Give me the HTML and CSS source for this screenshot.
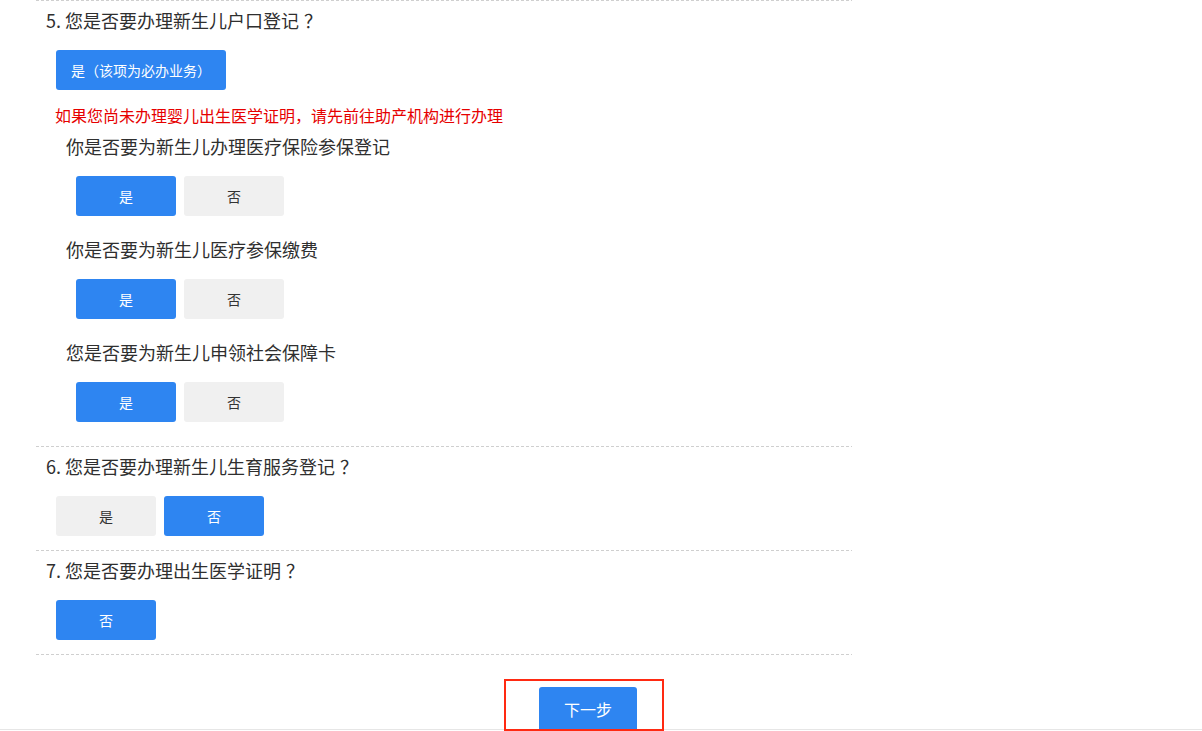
FILE: index.html
```html
<!DOCTYPE html>
<html lang="zh-CN">
<head>
<meta charset="utf-8">
<title>新生儿出生一件事</title>
<link rel="stylesheet" href="styles.css">
</head>
<body>
<div class="page">
  <div class="form">
    <div class="q">
      <div class="q-title">5. 您是否要办理新生儿户口登记<span class="qm">？</span></div>
      <div class="opts">
        <div class="btn on wide"><span class="btn-text">是（该项为必办业务）</span></div>
      </div>
      <div class="tip">如果您尚未办理婴儿出生医学证明，请先前往助产机构进行办理</div>
      <div class="sub-list">
        <div class="sub">
          <div class="sub-title">你是否要为新生儿办理医疗保险参保登记</div>
          <div class="opts">
            <div class="btn on">是</div>
            <div class="btn">否</div>
          </div>
        </div>
        <div class="sub">
          <div class="sub-title">你是否要为新生儿医疗参保缴费</div>
          <div class="opts">
            <div class="btn on">是</div>
            <div class="btn">否</div>
          </div>
        </div>
        <div class="sub">
          <div class="sub-title">您是否要为新生儿申领社会保障卡</div>
          <div class="opts">
            <div class="btn on">是</div>
            <div class="btn">否</div>
          </div>
        </div>
      </div>
    </div>
    <div class="q">
      <div class="q-title">6. 您是否要办理新生儿生育服务登记<span class="qm">？</span></div>
      <div class="opts">
        <div class="btn">是</div>
        <div class="btn on">否</div>
      </div>
    </div>
    <div class="q">
      <div class="q-title">7. 您是否要办理出生医学证明<span class="qm">？</span></div>
      <div class="opts">
        <div class="btn on">否</div>
      </div>
    </div>
    <div class="divider"></div>
    <div class="next-wrap">
      <div class="next-btn">下一步</div>
      <div class="mark"></div>
    </div>
  </div>
  <div class="footer"></div>
</div>
</body>
</html>
```

FILE: styles.css
```css
html, body {
  margin: 0;
  padding: 0;
  background: #fff;
}
body {
  font-family: "Noto Sans CJK SC", "Microsoft YaHei", sans-serif;
  color: #333;
  height: 731px;
  overflow: hidden;
}
.page {
  width: 1202px;
}
.form {
  margin-left: 36px;
  width: 816px;
}
.qm {
  display: inline-block;
  padding-left: 5px;
  margin-right: -5px;
}
.q,
.divider {
  background-image: repeating-linear-gradient(90deg, #cfcfcf 0 3px, transparent 3px 5px);
  background-repeat: no-repeat;
  background-size: 100% 1px;
  background-position: left top;
}
.q {
  padding: 8px 0 14px;
}
.divider {
  height: 1px;
}
.q-title {
  font-size: 18px;
  line-height: 24px;
  padding-left: 10px;
  color: #2f2f2f;
}
.opts {
  display: flex;
  gap: 8px;
  margin-top: 18px;
  padding-left: 20px;
}
.btn {
  box-sizing: border-box;
  height: 40px;
  min-width: 100px;
  padding: 0 15px;
  border-radius: 3px;
  background: #f0f0f0;
  color: #333;
  font-size: 14px;
  display: flex;
  align-items: center;
  justify-content: center;
}
.btn.on {
  background: #2e85f1;
  color: #fff;
}
.tip {
  margin-top: 14px;
  padding-left: 19px;
  font-size: 16px;
  line-height: 22px;
  color: #e60000;
}
.sub-list {
  padding-bottom: 10px;
}
.sub {
  margin-top: 21px;
}
.sub:first-child {
  margin-top: 8px;
}
.sub-title {
  font-size: 18px;
  line-height: 24px;
  padding-left: 30px;
  color: #2f2f2f;
}
.sub .opts {
  padding-left: 40px;
}
.next-wrap {
  position: relative;
  display: flex;
  padding-top: 32px;
  padding-left: 503px;
}
.next-btn {
  width: 98px;
  height: 42px;
  border-radius: 3px 3px 0 0;
  background: #2e85f1;
  color: #fff;
  font-size: 16px;
  display: flex;
  align-items: center;
  justify-content: center;
  padding-top: 2px;
  box-sizing: border-box;
}
.mark {
  position: absolute;
  left: 468px;
  top: 24px;
  width: 160px;
  height: 52px;
  box-sizing: border-box;
  border: 2px solid #ff2a12;
}
.footer {
  height: 2px;
  border-top: 1px solid #e6e6e6;
}
```
